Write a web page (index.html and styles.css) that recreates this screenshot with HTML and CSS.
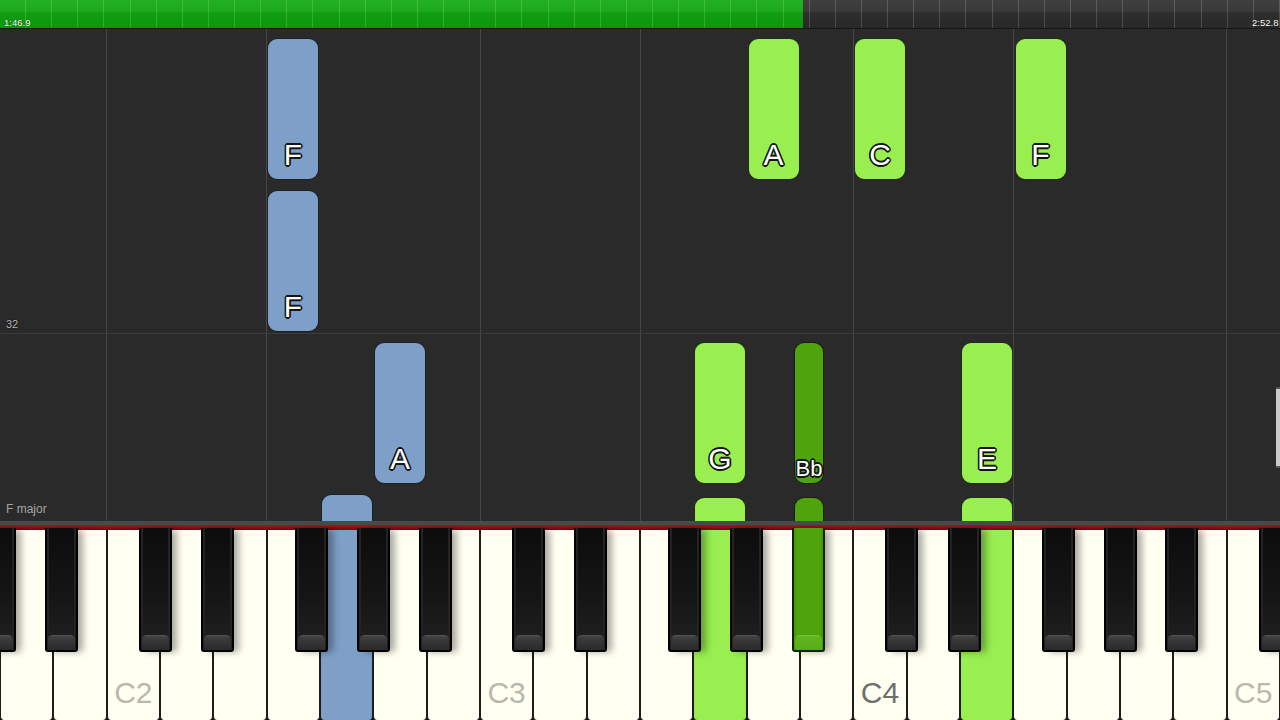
FILE: index.html
```html
<!DOCTYPE html>
<html lang="en">
<head>
<meta charset="utf-8">
<title>Piano roll</title>
<link rel="stylesheet" href="styles.css">
</head>
<body>
<div class="screen">
  <header class="timeline">
    <div class="played"></div>
    <div class="remaining"></div>
    <span class="time time-start">1:46.9</span>
    <span class="time time-end">2:52.8</span>
  </header>

  <section class="roll">
    <div class="measure measure-prev"><span class="measure-no">32</span></div>
    <div class="measure measure-cur"><span class="key-sig">F major</span></div>

    <div class="note left" style="left:267px;top:8.5px;height:142px">F</div>
    <div class="note left" style="left:267px;top:160.5px;height:142px">F</div>
    <div class="note left" style="left:374px;top:312.5px;height:142px">A</div>
    <div class="note left" style="left:320.5px;top:465px;height:142px"></div>

    <div class="note right" style="left:747.5px;top:8.5px;height:142px">A</div>
    <div class="note right" style="left:854px;top:8.5px;height:142px">C</div>
    <div class="note right" style="left:1014.5px;top:8.5px;height:142px">F</div>
    <div class="note right" style="left:694px;top:312.5px;height:142px">G</div>
    <div class="note right black" style="left:794px;top:312.5px;height:142px">Bb</div>
    <div class="note right" style="left:961px;top:312.5px;height:142px">E</div>
    <div class="note right" style="left:694px;top:467.5px;height:142px"></div>
    <div class="note right black" style="left:794px;top:467.5px;height:142px"></div>
    <div class="note right" style="left:961px;top:467.5px;height:142px"></div>

    <div class="scroll-handle"></div>
  </section>

  <section class="keyboard">
    <div class="kb-rail"></div>
    <div class="kb-felt"></div>
    <div class="keys">
      <div class="wk"><span class="bk gs-prev"></span><span class="bk as"></span></div>
      <div class="wk"></div>
      <div class="wk">C2<span class="bk cs"></span></div>
      <div class="wk"><span class="bk ds"></span></div>
      <div class="wk"></div>
      <div class="wk"><span class="bk fs"></span></div>
      <div class="wk hl-left"><span class="bk gs"></span></div>
      <div class="wk"><span class="bk as"></span></div>
      <div class="wk"></div>
      <div class="wk">C3<span class="bk cs"></span></div>
      <div class="wk"><span class="bk ds"></span></div>
      <div class="wk"></div>
      <div class="wk"><span class="bk fs"></span></div>
      <div class="wk hl-right"><span class="bk gs"></span></div>
      <div class="wk"><span class="bk as hl-right-dark"></span></div>
      <div class="wk"></div>
      <div class="wk middle-c">C4<span class="bk cs"></span></div>
      <div class="wk"><span class="bk ds"></span></div>
      <div class="wk hl-right"></div>
      <div class="wk"><span class="bk fs"></span></div>
      <div class="wk"><span class="bk gs"></span></div>
      <div class="wk"><span class="bk as"></span></div>
      <div class="wk"></div>
      <div class="wk">C5<span class="bk cs"></span></div>
    </div>
  </section>
</div>
</body>
</html>
```

FILE: styles.css
```css
html, body {
  margin: 0;
  padding: 0;
  background: #2a2a2a;
}

.screen {
  width: 1280px;
  height: 720px;
  overflow: hidden;
  display: flex;
  flex-direction: column;
  font-family: "Liberation Sans", Arial, sans-serif;
}

/* ---------- timeline ---------- */
.timeline {
  position: relative;
  flex: none;
  height: 29px;
  box-sizing: border-box;
  border-bottom: 1px solid #171717;
  display: flex;
}

.played {
  width: 803px;
  background: linear-gradient(#22b122 0%, #1caa1c 40%, #119d11 46%, #0c970c 100%);
}

.remaining {
  flex: 1;
  background: linear-gradient(#3e3e3e 0%, #393939 42%, #2d2d2d 46%, #292929 100%);
}

.timeline::after {
  content: "";
  position: absolute;
  inset: 0;
  background: repeating-linear-gradient(90deg, transparent 0 25.12px, rgba(255, 255, 255, 0.16) 25.12px 26.12px);
  pointer-events: none;
}

.time {
  position: absolute;
  top: 17px;
  z-index: 1;
  font-size: 9.5px;
  line-height: 11px;
  color: #fff;
  white-space: nowrap;
  text-shadow: 0 0 1px rgba(0, 0, 0, 0.8);
}

.time-start { left: 4px; }
.time-end { left: 1252px; }

/* ---------- piano roll ---------- */
.roll {
  position: relative;
  flex: none;
  height: 492px;
  overflow: hidden;
  display: flex;
  flex-direction: column;
  background-color: #2a2a2a;
  background-image: repeating-linear-gradient(90deg,
    transparent 0 106.2px,
    #474747 106.2px 107.2px,
    transparent 107.2px 266.2px,
    #474747 266.2px 267.2px,
    transparent 267.2px 373.333px);
}

.measure {
  display: flex;
  align-items: flex-end;
  box-sizing: border-box;
  padding-left: 6px;
  color: #a8a8a8;
}

.measure-prev {
  flex: none;
  height: 305px;
  border-bottom: 1px solid #3c3c3c;
  padding-bottom: 3px;
}

.measure-cur {
  flex: 1;
  padding-bottom: 6.5px;
}

.measure-no {
  font-size: 11px;
  line-height: 11px;
  color: #b4b4b4;
  text-shadow: 0 0 2px #000;
}

.key-sig {
  font-size: 12px;
  line-height: 12px;
  color: #a4a4a4;
}

.note {
  position: absolute;
  width: 52px;
  box-sizing: border-box;
  border: 1.5px solid rgba(10, 10, 10, 0.85);
  border-radius: 10px;
  display: flex;
  flex-direction: column;
  justify-content: flex-end;
  align-items: center;
  padding-bottom: 8.8px;
  color: #fff;
  font-size: 30px;
  line-height: 30px;
  white-space: nowrap;
  text-shadow:
    -1.6px 0 0 #151515, 1.6px 0 0 #151515, 0 -1.6px 0 #151515, 0 1.6px 0 #151515,
    -1.2px -1.2px 0 #151515, 1.2px -1.2px 0 #151515, -1.2px 1.2px 0 #151515, 1.2px 1.2px 0 #151515;
}

.note.left { background: #7d9fc8; }
.note.right { background: #98ef4f; }

.note.right.black {
  width: 30px;
  background: #4fa30c;
  font-size: 22px;
  line-height: 22px;
  padding-bottom: 3px;
}

.scroll-handle {
  position: absolute;
  right: 0;
  top: 358px;
  width: 4px;
  height: 81px;
  background: #c9c9c9;
  border-top: 2px solid #555;
  border-bottom: 2px solid #555;
  box-sizing: border-box;
}

/* ---------- keyboard ---------- */
.keyboard {
  flex: none;
  height: 199px;
  display: flex;
  flex-direction: column;
  background: #101010;
}

.kb-rail {
  height: 4px;
  background: #4a4a4a;
}

.kb-felt {
  height: 5px;
  background: linear-gradient(#b0121e, #6c0610);
}

.keys {
  flex: 1;
  display: flex;
}

.wk {
  flex: 1;
  position: relative;
  box-sizing: border-box;
  background: #fffff2;
  border-left: 1px solid #1c1c1c;
  border-right: 1px solid #1c1c1c;
  border-radius: 0 0 4px 4px;
  display: flex;
  justify-content: center;
  align-items: flex-end;
  padding-bottom: 12px;
  font-size: 30px;
  line-height: 30px;
  color: #b9b9ab;
}

.wk.middle-c { color: #6f6f6b; }
.wk.hl-left { background: #7d9fc8; }
.wk.hl-right { background: #98ef4f; }

.bk {
  position: absolute;
  top: -2px;
  z-index: 2;
  width: 33px;
  height: 124px;
  box-sizing: border-box;
  background: linear-gradient(#0c0c0c, #161616 60%, #1e1e1e 88%);
  border: 2px solid #000;
  border-top: none;
  border-radius: 0 0 3px 3px;
  box-shadow:
    inset 2px 0 0 #232323,
    inset -2px 0 0 #232323,
    6px 1px 7px -1px rgba(0, 0, 0, 0.34);
}

.bk::after {
  content: "";
  position: absolute;
  left: 1px;
  right: 1px;
  bottom: 0;
  height: 15px;
  border-radius: 5px 5px 1px 1px / 4px 4px 1px 1px;
  background: linear-gradient(#585858 0, #3f3f3f 2px, #343434 50%, #2a2a2a 100%);
}

.bk.gs-prev { left: -17.6px; }
.bk.cs { left: 31px; }
.bk.ds { left: 40px; }
.bk.fs { left: 27.5px; }
.bk.gs { left: 36px; }
.bk.as { left: 44.3px; }

.bk.hl-right-dark {
  background: #4fa30c;
  border-color: #10230a;
  box-shadow:
    inset 2px 0 0 #48990a,
    inset -2px 0 0 #48990a,
    6px 1px 7px -1px rgba(0, 0, 0, 0.34);
}

.bk.hl-right-dark::after {
  background: linear-gradient(#7cc83c 0, #60b420 2px, #57ac17 100%);
}
```
